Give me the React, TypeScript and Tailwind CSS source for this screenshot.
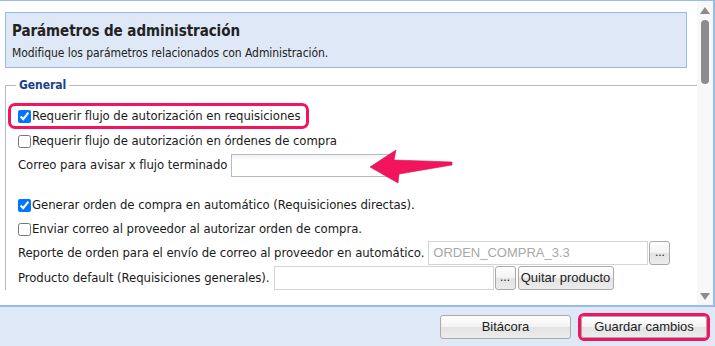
import React from "react";

// ─── Shared bits ────────────────────────────────────────────────────────────

const FONT = { fontFamily: '"DejaVu Sans Condensed", "DejaVu Sans", sans-serif' };
const BTN_FONT = { fontFamily: '"Liberation Sans", Arial, sans-serif' };

const btnClass =
  "flex items-center justify-center rounded-[3px] border border-[#a9a9a9] bg-[linear-gradient(#fefefe,#f3f3f3_48%,#e3e3e3_52%,#ececec)] text-[12px] text-[#222]";

function Check({ checked }: { checked?: boolean }) {
  return (
    <input
      type="checkbox"
      defaultChecked={checked}
      className="m-0 mr-[1px] h-[13px] w-[13px] shrink-0 accent-[#0075ff]"
    />
  );
}

function DotsButton() {
  return (
    <button type="button" className={`${btnClass} h-[24px] w-[21px] items-end pb-[3px] text-[10px]`} style={BTN_FONT}>
      ...
    </button>
  );
}

function Arrow() {
  return (
    <svg
      className="pointer-events-none absolute left-[365px] top-[145px]"
      width="92"
      height="42"
      viewBox="0 0 92 42"
      aria-hidden="true"
    >
      <polygon
        points="5,22 31,5 29,15 87,17 87,20 34,29 33,38"
        fill="#f2145c"
        stroke="#d8104f"
        strokeWidth="0.6"
        strokeLinejoin="round"
      />
    </svg>
  );
}

function Scrollbar() {
  return (
    <div className="flex w-[16px] shrink-0 flex-col items-center bg-[#f8f8f8]">
      <svg width="10" height="7" viewBox="0 0 10 7" className="mt-[6px]" aria-hidden="true">
        <polygon points="5,0 10,7 0,7" fill="#8c8c8c" />
      </svg>
      <div className="mt-[6px] h-[64px] w-[8px] rounded-full bg-[#8c8c8c]" />
      <div className="flex-1" />
      <svg width="10" height="7" viewBox="0 0 10 7" className="mb-[5px]" aria-hidden="true">
        <polygon points="0,0 10,0 5,7" fill="#8c8c8c" />
      </svg>
    </div>
  );
}

// ─── App ────────────────────────────────────────────────────────────────────

export default function App() {
  return (
    <div
      className="relative h-[346px] w-[715px] overflow-hidden bg-white text-[13px] tracking-[-0.06px] text-[#1a1a1a]"
      style={FONT}
    >
      {/* Scrolling body */}
      <div className="flex h-[305px] border-r-2 border-t border-[#99bbe8]">
        <div className="flex-1 overflow-hidden pl-[5px] pt-[11px]">
          {/* Header */}
          <div className="mr-[10px] h-[56px] border border-[#99bbe8] bg-[#dfe8f6] px-[6px] pt-[8px]">
            <div className="text-[15px] font-bold leading-[20px] text-[#222]">Parámetros de administración</div>
            <div className="mt-[4px] text-[12px] leading-[16px] text-[#222]">
              Modifique los parámetros relacionados con Administración.
            </div>
          </div>

          {/* General fieldset */}
          <fieldset className="mt-[10px] w-[740px] border-l border-t border-[#b5b8c8] pl-[12px] pt-[11px]">
            <legend className="-ml-[2px] px-[3px] text-[12px] font-bold leading-[14px] text-[#15428b]">General</legend>

            <div className="-ml-[10px] flex h-[26px] w-fit items-center rounded-[7px] border-[3px] border-[#f2145c] pl-[7px] pr-[6px]">
              <Check checked />
              <span>Requerir flujo de autorización en requisiciones</span>
            </div>
            <div className="flex h-[24px] items-center">
              <Check />
              <span>Requerir flujo de autorización en órdenes de compra</span>
            </div>
            <div className="flex h-[24px] items-center gap-[4px]">
              <span>Correo para avisar x flujo terminado</span>
              <div className="h-[23px] w-[158px] border border-[#b5b8c8] bg-[linear-gradient(#f4f4f4,#ffffff_30%)]" />
            </div>

            <div className="mt-[16px] flex h-[24px] items-center">
              <Check checked />
              <span>Generar orden de compra en automático (Requisiciones directas).</span>
            </div>
            <div className="flex h-[24px] items-center">
              <Check />
              <span>Enviar correo al proveedor al autorizar orden de compra.</span>
            </div>
            <div className="flex h-[24px] items-center gap-[4px]">
              <span>Reporte de orden para el envío de correo al proveedor en automático.</span>
              <div
                className="flex h-[24px] w-[220px] items-center border border-[#d4d4d4] bg-white px-[4px] text-[13px] tracking-normal text-[#a8a8a8]"
                style={BTN_FONT}
              >
                ORDEN_COMPRA_3.3
              </div>
              <div className="-ml-[3px]">
                <DotsButton />
              </div>
            </div>
            <div className="mt-[1px] flex h-[24px] items-center gap-[4px]">
              <span>Producto default (Requisiciones generales).</span>
              <div className="h-[24px] w-[220px] border border-[#d4d4d4] bg-white" />
              <div className="-ml-[3px] flex gap-[2px] tracking-normal">
                <DotsButton />
                <button type="button" className={`${btnClass} h-[24px] w-[96px] text-[13px]`} style={BTN_FONT}>
                  Quitar producto
                </button>
              </div>
            </div>
          </fieldset>
        </div>
        <Scrollbar />
      </div>

      {/* Footer toolbar */}
      <div className="flex h-[41px] items-center justify-end gap-[7px] border-t-2 border-[#99bbe8] bg-[#dfe8f6] pr-[5px] tracking-normal">
        <button type="button" className={`${btnClass} h-[24px] w-[131px] text-[13px]`} style={BTN_FONT}>
          Bitácora
        </button>
        <div className="rounded-[6px] border-[3px] border-[#f2145c]">
          <button type="button" className={`${btnClass} h-[22px] w-[126px] text-[13px]`} style={BTN_FONT}>
            Guardar cambios
          </button>
        </div>
      </div>

      <Arrow />
    </div>
  );
}
